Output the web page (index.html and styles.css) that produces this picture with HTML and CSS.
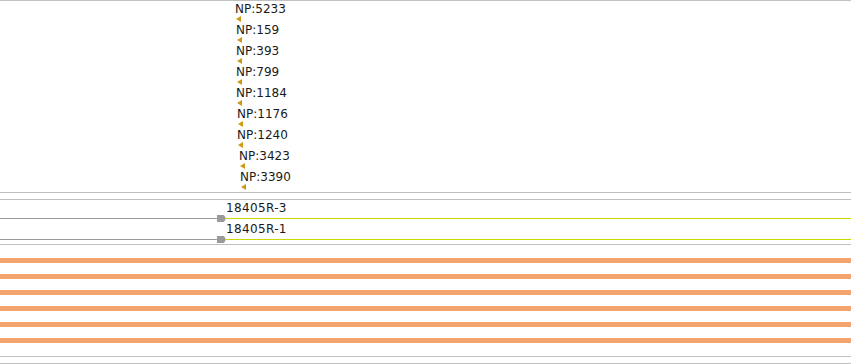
FILE: index.html
```html
<!DOCTYPE html>
<html lang="en">
<head>
    <meta charset="UTF-8">
    <title>Track view</title>
    <link rel="stylesheet" href="styles.css">
</head>
<body>
    <div class="browser">
        <!-- NP features, one per row -->
        <div class="track np-track">
            <div class="np-row" style="--x:236px"><span class="np-label">NP:5233</span><span class="np-mark"></span></div>
            <div class="np-row" style="--x:237px"><span class="np-label">NP:159</span><span class="np-mark"></span></div>
            <div class="np-row" style="--x:237px"><span class="np-label">NP:393</span><span class="np-mark"></span></div>
            <div class="np-row" style="--x:237px"><span class="np-label">NP:799</span><span class="np-mark"></span></div>
            <div class="np-row" style="--x:237px"><span class="np-label">NP:1184</span><span class="np-mark"></span></div>
            <div class="np-row" style="--x:238px"><span class="np-label">NP:1176</span><span class="np-mark"></span></div>
            <div class="np-row" style="--x:238px"><span class="np-label">NP:1240</span><span class="np-mark"></span></div>
            <div class="np-row" style="--x:240px"><span class="np-label">NP:3423</span><span class="np-mark"></span></div>
            <div class="np-row" style="--x:241px"><span class="np-label">NP:3390</span><span class="np-mark"></span></div>
        </div>

        <!-- reads -->
        <div class="track read-track">
            <div class="read-row">
                <span class="read-label">18405R-3</span>
                <div class="read-line">
                    <span class="read-tail"></span>
                    <svg class="read-head" width="9" height="7" viewBox="0 0 9 7"><polygon points="0,0 7,0 9,3.5 7,7 0,7" fill="#9a9a9a"/></svg>
                    <span class="read-body"></span>
                </div>
            </div>
            <div class="read-row">
                <span class="read-label">18405R-1</span>
                <div class="read-line">
                    <span class="read-tail"></span>
                    <svg class="read-head" width="9" height="7" viewBox="0 0 9 7"><polygon points="0,0 7,0 9,3.5 7,7 0,7" fill="#9a9a9a"/></svg>
                    <span class="read-body"></span>
                </div>
            </div>
        </div>

        <!-- coverage bars -->
        <div class="track bar-track">
            <div class="bar"></div>
            <div class="bar"></div>
            <div class="bar"></div>
            <div class="bar"></div>
            <div class="bar"></div>
            <div class="bar"></div>
        </div>

        <div class="track empty-track"></div>
    </div>
</body>
</html>
```

FILE: styles.css
```css
/* General */
body {
    margin: 0;
    padding: 0;
    background-color: white;
    font-family: 'DejaVu Sans', sans-serif;
    color: #1a1a1a;
    overflow: hidden;
}

.browser {
    width: 851px;
    display: flex;
    flex-direction: column;
}

.track {
    border-top: 1px solid #c0c0c0;
    border-bottom: 1px solid #c0c0c0;
    box-sizing: border-box;
}

/* NP features */
.np-track {
    height: 193px;
}

.np-row {
    height: 21px;
    padding-top: 1px;
    box-sizing: border-box;
    display: flex;
    flex-direction: column;
    align-items: flex-start;
}

.np-label {
    margin-left: calc(var(--x) - 1px);
    font-size: 12px;
    line-height: 14px;
    height: 14px;
}

.np-mark {
    margin-left: var(--x);
    width: 0;
    height: 0;
    border-top: 3px solid transparent;
    border-bottom: 3px solid transparent;
    border-right: 5px solid #cf9a12;
}

/* reads */
.read-track {
    margin-top: 6px;
    height: 46px;
    padding-top: 1px;
}

.read-row {
    display: flex;
    flex-direction: column;
}

.read-label {
    margin-left: 226px;
    font-size: 12px;
    line-height: 14px;
    height: 14px;
    letter-spacing: 0.35px;
}

.read-line {
    height: 7px;
    display: flex;
    align-items: center;
}

.read-tail {
    width: 217px;
    height: 1px;
    background-color: #9a9a9a;
}

.read-head {
    display: block;
    margin-right: -1px;
}

.read-body {
    flex: 1;
    height: 1px;
    background-color: #c8d800;
}

/* coverage bars */
.bar-track {
    border-top: none;
    height: 112px;
    padding: 13px 0;
    display: flex;
    flex-direction: column;
    gap: 11px;
}

.bar {
    height: 5px;
    background-color: #f4a46e;
}

.empty-track {
    margin-top: 6px;
    height: 1px;
    border-bottom: none;
}
```
